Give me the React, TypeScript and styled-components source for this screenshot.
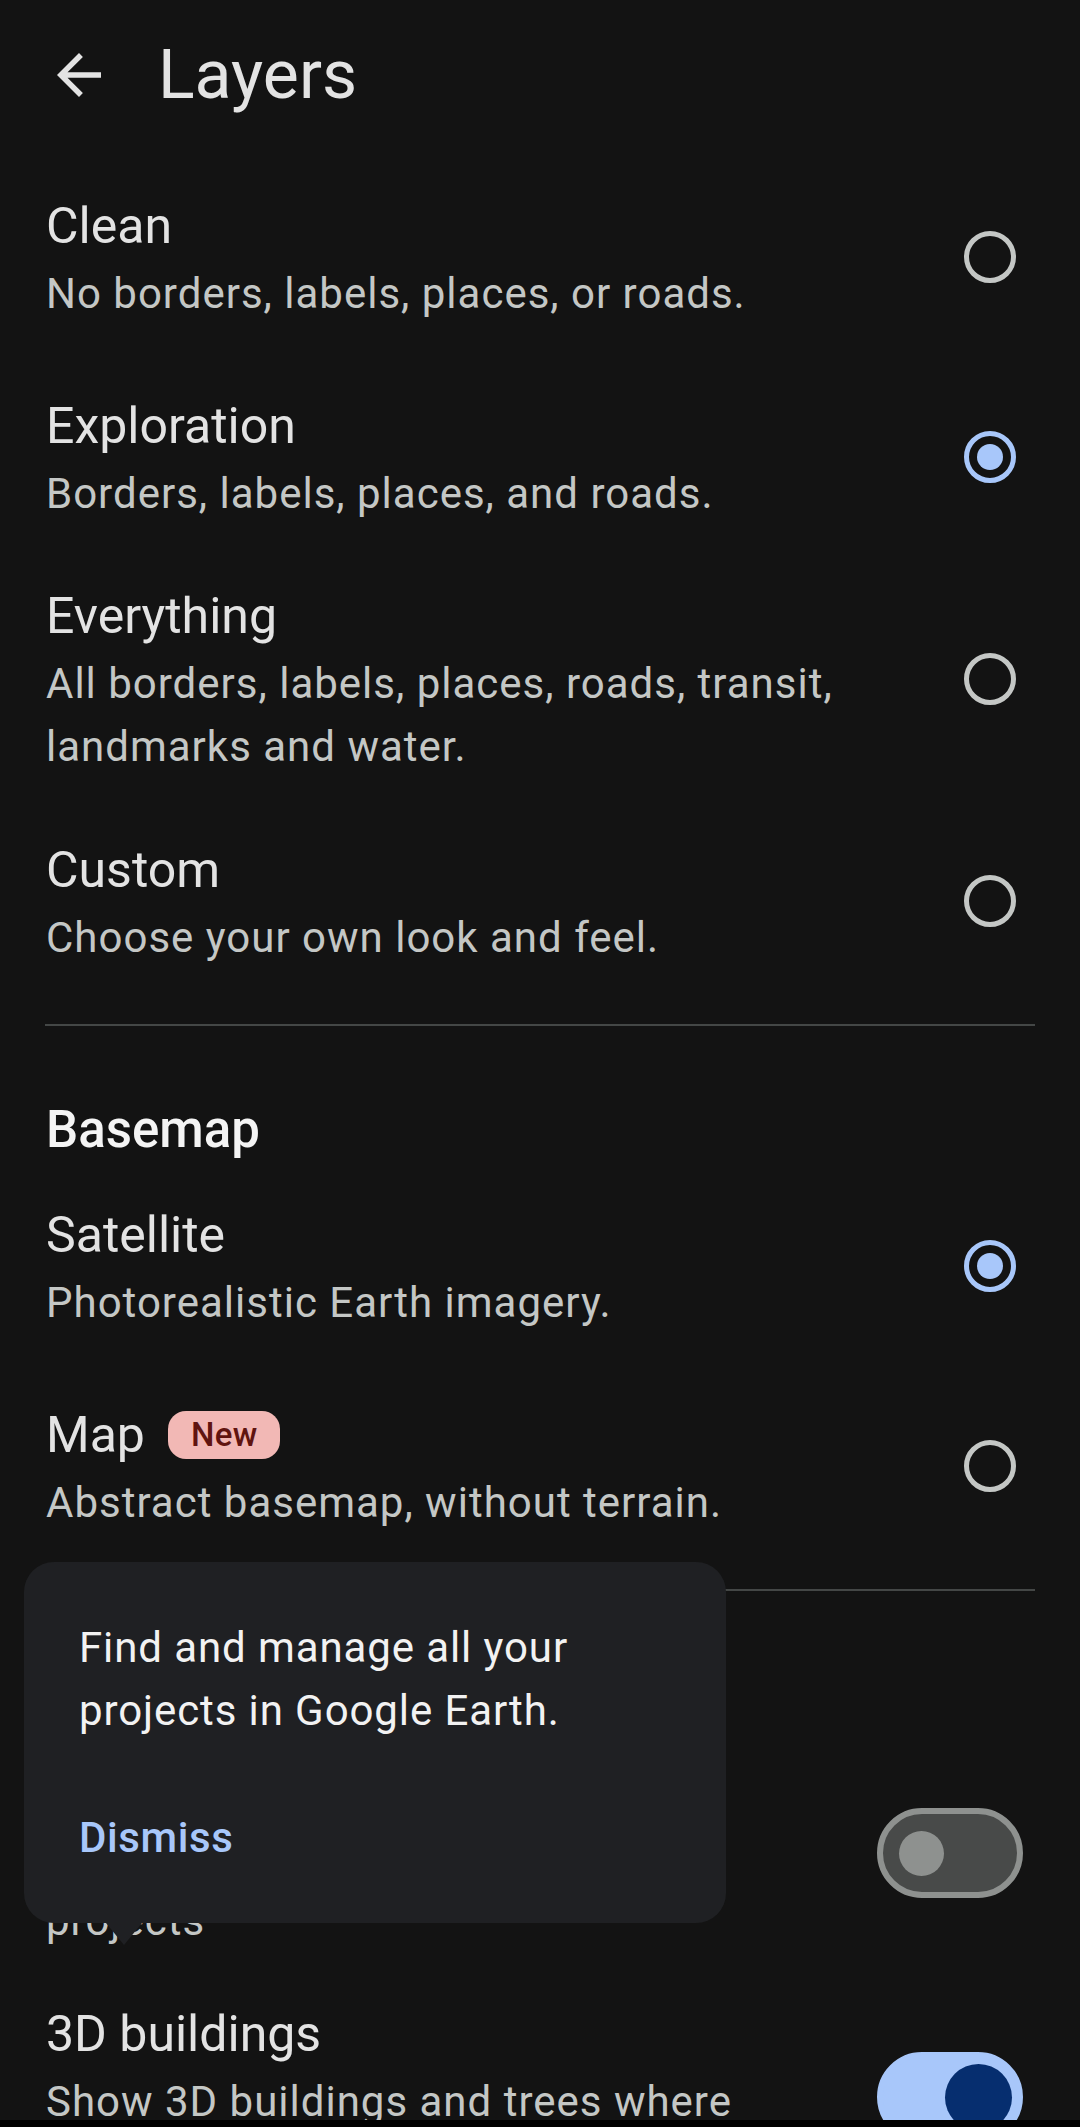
import React from "react";
import styled, { createGlobalStyle } from "styled-components";

const GlobalStyle = createGlobalStyle`
  html, body {
    margin: 0;
    padding: 0;
    background: #131313;
  }
  body {
    font-family: Roboto, "Noto Sans", "Liberation Sans", sans-serif;
    -webkit-font-smoothing: antialiased;
  }
  * { box-sizing: border-box; }
`;

const Page = styled.div`
  width: 1080px;
  height: 2127px;
  display: flex;
  flex-direction: column;
  overflow: hidden;
  background: #131313;
`;

const Content = styled.main`
  position: relative;
  flex: 1;
  min-height: 0;
  overflow: hidden;
`;

const TopBar = styled.header`
  height: 150px;
  display: flex;
  align-items: center;
  padding-left: 46px;
  gap: 46px;
`;

const BackButton = styled.button`
  width: 66px;
  height: 66px;
  padding: 0;
  border: 0;
  background: transparent;
  color: #e3e3e3;
  display: flex;
  align-items: center;
  justify-content: center;
  svg {
    width: 66px;
    height: 66px;
    display: block;
  }
`;

const PageTitle = styled.h1`
  margin: 0;
  font-size: 68px;
  line-height: 68px;
  font-weight: 400;
  color: #e3e3e3;
`;

const List = styled.div`
  padding-top: 7px;
`;

const Row = styled.div`
  display: flex;
  align-items: center;
  min-height: 200px;
  padding: 23px 46px;
  gap: 48px;
`;

const RowText = styled.div`
  flex: 1;
  min-width: 0;
`;

const ItemTitle = styled.div`
  display: flex;
  align-items: center;
  gap: 23px;
  font-size: 50px;
  line-height: 72px;
  color: #e3e3e3;
`;

const ItemSub = styled.div`
  font-size: 42px;
  line-height: 63px;
  letter-spacing: 1px;
  color: #c4c7c5;
`;

const Badge = styled.span`
  display: inline-flex;
  align-items: center;
  justify-content: center;
  height: 48px;
  padding: 0 23px;
  border-radius: 18px;
  background: #f2b8b5;
  color: #601410;
  font-size: 33px;
  font-weight: 500;
  letter-spacing: 0.3px;
`;

const Radio = styled.span<{ $checked?: boolean }>`
  flex: none;
  width: 52px;
  height: 52px;
  margin-right: 18px;
  border-radius: 50%;
  border: 5px solid ${(p) => (p.$checked ? "#a8c7fa" : "#c4c7c5")};
  display: flex;
  align-items: center;
  justify-content: center;
  &::after {
    content: "";
    display: ${(p) => (p.$checked ? "block" : "none")};
    width: 26px;
    height: 26px;
    border-radius: 50%;
    background: #a8c7fa;
  }
`;

const Switch = styled.span<{ $on?: boolean }>`
  flex: none;
  position: relative;
  width: 146px;
  height: 90px;
  margin-right: 11px;
  border-radius: 45px;
  border: 6px solid ${(p) => (p.$on ? "#a8c7fa" : "#8e918f")};
  background: ${(p) => (p.$on ? "#a8c7fa" : "#484a49")};
  display: flex;
  align-items: center;
  justify-content: ${(p) => (p.$on ? "flex-end" : "flex-start")};
  padding: ${(p) => (p.$on ? "0 5px" : "0 16px")};
  &::after {
    content: "";
    display: block;
    width: ${(p) => (p.$on ? "67px" : "45px")};
    height: ${(p) => (p.$on ? "67px" : "45px")};
    border-radius: 50%;
    background: ${(p) => (p.$on ? "#062e6f" : "#8e918f")};
  }
`;

const Divider = styled.hr`
  margin: 23px 45px 0;
  height: 2px;
  border: 0;
  background: #444746;
`;

const SectionHeader = styled.h2`
  margin: 68px 0 0;
  padding: 0 46px;
  font-size: 51px;
  line-height: 72px;
  font-weight: 500;
  color: #f4f4f4;
`;

const Tooltip = styled.div`
  position: absolute;
  left: 24px;
  top: 1562px;
  width: 702px;
  padding: 54px 55px;
  border-radius: 30px;
  background: #1f2023;
  &::after {
    content: "";
    position: absolute;
    top: 100%;
    left: 82px;
    width: 0;
    height: 0;
    border-left: 18px solid transparent;
    border-right: 18px solid transparent;
    border-top: 22px solid #1f2023;
  }
`;

const TooltipText = styled.p`
  margin: 0;
  font-size: 42px;
  line-height: 63px;
  letter-spacing: 0.9px;
  color: #f2f2f2;
`;

const DismissButton = styled.button`
  display: block;
  margin-top: 64px;
  padding: 0;
  border: 0;
  background: transparent;
  font-family: inherit;
  font-size: 42px;
  line-height: 63px;
  font-weight: 500;
  letter-spacing: 0.6px;
  color: #a8c7fa;
`;

const NavBar = styled.div`
  flex: none;
  height: 7px;
  background: #000;
`;

type Item = {
  title: string;
  sub: string;
  checked?: boolean;
  badge?: string;
};

const styles: Item[] = [
  { title: "Clean", sub: "No borders, labels, places, or roads." },
  { title: "Exploration", sub: "Borders, labels, places, and roads.", checked: true },
  {
    title: "Everything",
    sub: "All borders, labels, places, roads, transit, landmarks and water.",
  },
  { title: "Custom", sub: "Choose your own look and feel." },
];

const basemaps: Item[] = [
  { title: "Satellite", sub: "Photorealistic Earth imagery.", checked: true },
  { title: "Map", sub: "Abstract basemap, without terrain.", badge: "New" },
];

const toggles: { title: string; sub: string; on: boolean }[] = [
  { title: "Projects", sub: "Show features from all your saved projects", on: false },
  { title: "3D buildings", sub: "Show 3D buildings and trees where available.", on: true },
];

const RadioRow = ({ item }: { item: Item }) => (
  <Row>
    <RowText>
      <ItemTitle>
        <span>{item.title}</span>
        {item.badge && <Badge>{item.badge}</Badge>}
      </ItemTitle>
      <ItemSub>{item.sub}</ItemSub>
    </RowText>
    <Radio $checked={item.checked} />
  </Row>
);

export default function App() {
  return (
    <>
      <GlobalStyle />
      <Page>
        <Content>
          <TopBar>
            <BackButton aria-label="Back">
              <svg viewBox="0 0 24 24" fill="currentColor">
                <path d="M20 11H7.83l5.59-5.59L12 4l-8 8 8 8 1.41-1.41L7.83 13H20v-2z" />
              </svg>
            </BackButton>
            <PageTitle>Layers</PageTitle>
          </TopBar>
          <List>
            {styles.map((s) => (
              <RadioRow key={s.title} item={s} />
            ))}
            <Divider />
            <SectionHeader>Basemap</SectionHeader>
            {basemaps.map((s) => (
              <RadioRow key={s.title} item={s} />
            ))}
            <Divider />
            <SectionHeader>Other</SectionHeader>
            {toggles.map((t) => (
              <Row key={t.title}>
                <RowText>
                  <ItemTitle>{t.title}</ItemTitle>
                  <ItemSub>{t.sub}</ItemSub>
                </RowText>
                <Switch $on={t.on} />
              </Row>
            ))}
          </List>
          <Tooltip>
            <TooltipText>Find and manage all your projects in Google Earth.</TooltipText>
            <DismissButton>Dismiss</DismissButton>
          </Tooltip>
        </Content>
        <NavBar />
      </Page>
    </>
  );
}
